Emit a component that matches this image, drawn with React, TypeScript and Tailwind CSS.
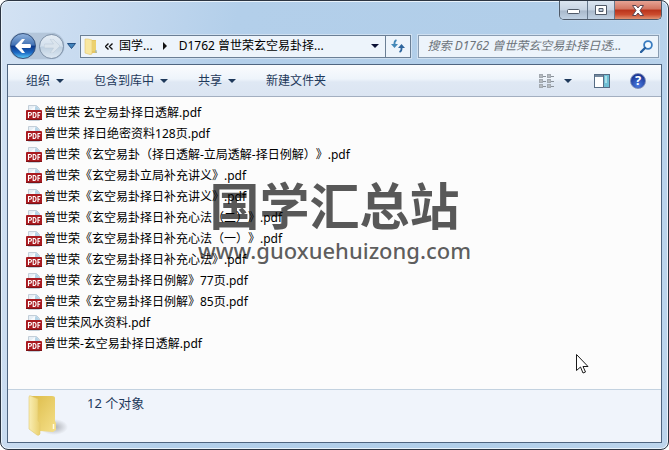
import React from "react";

const files = [
  "曾世荣 玄空易卦择日透解.pdf",
  "曾世荣 择日绝密资料128页.pdf",
  "曾世荣《玄空易卦（择日透解-立局透解-择日例解）》.pdf",
  "曾世荣《玄空易卦立局补充讲义》.pdf",
  "曾世荣《玄空易卦择日补充讲义》.pdf",
  "曾世荣《玄空易卦择日补充心法（二）》.pdf",
  "曾世荣《玄空易卦择日补充心法（一）》.pdf",
  "曾世荣《玄空易卦择日补充心法》.pdf",
  "曾世荣《玄空易卦择日例解》77页.pdf",
  "曾世荣《玄空易卦择日例解》85页.pdf",
  "曾世荣风水资料.pdf",
  "曾世荣-玄空易卦择日透解.pdf",
];

function Caret({ className = "" }: { className?: string }) {
  return (
    <svg width="8" height="4" viewBox="0 0 8 4" className={className} aria-hidden="true">
      <path d="M0 0h8L4 4z" fill="currentColor" />
    </svg>
  );
}

function PdfIcon() {
  return (
    <svg width="16" height="16" viewBox="0 0 16 16" className="shrink-0" aria-hidden="true">
      <path d="M2.500 15.500V.500h8l3 3v12z" fill="#e6eef5" stroke="#c3ced8" />
      <path d="M10 .500 14 5H8z" fill="#b4d3e6" />
      <path d="M3 6 9 1v6z" fill="#f8fbfd" />
      <rect x="0" y="5" width="16" height="10" rx="1" fill="#a91a20" />
      <path d="M0 14.500h16" stroke="#7c1216" />
      <path d="M2.500 13V7.500h1.700q1.300 0 1.300 1.300t-1.300 1.400H3M7.200 7.500v5h1q1.800 0 1.800-2.500T8.200 7.500zM12 13V7.500h2.500M12 10.200h2" fill="none" stroke="#fff" strokeWidth="1.100" />
    </svg>
  );
}

function SmallFolder() {
  return (
    <svg width="14" height="17" viewBox="0 0 14 17" aria-hidden="true">
      <path d="M6 2h6v11l1 1v1H6z" fill="#e6c763" />
      <path d="M1 1h3l4 1v14l-2 .5L1 15z" fill="#f8e7a0" stroke="#e2c56b" strokeWidth=".6" />
      <path d="M8 3h4v10H8z" fill="#ecd16f" />
      <path d="M11.500 12h1v3h-1z" fill="#8fb3c6" />
    </svg>
  );
}

function LargeFolder() {
  return (
    <svg width="40" height="44" viewBox="0 0 40 44" aria-hidden="true">
      <defs>
        <linearGradient id="flap" x1="0" x2="1">
          <stop offset="0" stopColor="#f9eeb4" />
          <stop offset="1" stopColor="#e9cf6d" />
        </linearGradient>
        <linearGradient id="back" x1="0" x2="1" y2="1">
          <stop offset="0" stopColor="#dcbb48" />
          <stop offset="1" stopColor="#f5e08a" />
        </linearGradient>
        <radialGradient id="shade">
          <stop offset="0" stopColor="#8a8c91" stopOpacity=".7" />
          <stop offset="1" stopColor="#8a8c91" stopOpacity="0" />
        </radialGradient>
      </defs>
      <ellipse cx="26" cy="33" rx="14" ry="8" fill="url(#shade)" />
      <path d="M3 2h21q3 0 3 2v23l1 2v7l-3 2-13-1z" fill="url(#back)" />
      <path d="M1 3q0-2 2-1l7 3v22l2 2v11q-1 2-3 1L1 35z" fill="url(#flap)" stroke="#e3ca70" strokeWidth=".6" />
      <path d="M25.500 30v5" stroke="#fffbe6" strokeWidth="1.500" />
    </svg>
  );
}

function NavButtons() {
  return (
    <div className="flex h-[26px] w-[54px] items-center rounded-full bg-[#b4c6da] shadow-[0_0_1px_#7f94ab]">
      <button aria-label="后退" className="flex size-[26px] items-center justify-center rounded-full border border-[#33507c] bg-[linear-gradient(#8fb1dc_0%,#4473b4_45%,#0d3a8c_52%,#1d6ac4_78%,#5cc8f5_100%)]">
        <svg width="16" height="14" viewBox="0 0 16 14" aria-hidden="true">
          <path d="M0 7 7 0h3L6.500 5H15q1 0 1 2t-1 2H6.500L10 14H7z" fill="#fff" />
        </svg>
      </button>
      <button aria-label="前进" className="ml-[3px] flex size-[25px] items-center justify-center rounded-full border border-[#7e91a8] bg-[linear-gradient(#e5edf5_0%,#d3e0ed_48%,#bdcfe0_52%,#dde8f2_100%)]">
        <svg width="16" height="14" viewBox="0 0 16 14" aria-hidden="true">
          <path d="M16 7 9 0H6l3.500 5H1Q0 5 0 7t1 2h8.500L6 14h3z" fill="#dae4ed" stroke="#bdcbd8" strokeWidth=".6" />
        </svg>
      </button>
    </div>
  );
}

function WindowControls() {
  return (
    <div className="flex h-[19px] overflow-hidden rounded-b-[5px] border border-t-0 border-[#4e5a69] shadow-[0_0_1px_#fff]">
      <button aria-label="最小化" className="flex w-7 items-center justify-center border-r border-[#66788c] bg-[linear-gradient(#dbe5f0_0%,#c6d3e2_50%,#a9b9cb_55%,#c0d1e3_100%)]">
        <svg width="13" height="6" viewBox="0 0 13 6" className="mt-1" aria-hidden="true">
          <rect x=".5" y=".5" width="12" height="4" rx="1" fill="#fff" stroke="#505a68" />
        </svg>
      </button>
      <button aria-label="最大化" className="flex w-[27px] items-center justify-center border-r border-[#66788c] bg-[linear-gradient(#dbe5f0_0%,#c6d3e2_50%,#a9b9cb_55%,#c0d1e3_100%)]">
        <svg width="12" height="10" viewBox="0 0 12 10" aria-hidden="true">
          <path d="M.5.500h11v9H.500zM4 3.500v3h4v-3z" fill="#fff" fillRule="evenodd" stroke="#505a68" />
        </svg>
      </button>
      <button aria-label="关闭" className="flex w-[46px] items-center justify-center bg-[linear-gradient(#e6a394_0%,#d27460_45%,#b9331b_50%,#cb4b2e_75%,#e09373_100%)]">
        <svg width="12" height="11" viewBox="0 0 12 11" aria-hidden="true">
          <path d="M.5.500h3.500L6 3 8 .500h3.500L8 5.500l3.500 5H8L6 8l-2 2.500H.500L4 5.500z" fill="#fff" stroke="#5b4550" />
        </svg>
      </button>
    </div>
  );
}

function AddressBar() {
  return (
    <div className="flex h-[23px] min-w-0 flex-[332] items-center border border-[#6b7f95] bg-[#edf4fb] text-black shadow-[0_0_0_1px_#cfe0f1]">
      <div className="ml-[3px] shrink-0"><SmallFolder /></div>
      <button aria-label="上级位置" className="ml-[7px] shrink-0">
        <svg width="8" height="7" viewBox="0 0 8 7" aria-hidden="true">
          <path d="M3.500.500.500 3.500l3 3M7.500.500l-3 3 3 3" fill="none" stroke="#111" strokeWidth="1.400" />
        </svg>
      </button>
      <button className="ml-[6px] shrink-0">国学...</button>
      <svg width="4" height="8" viewBox="0 0 4 8" className="ml-[10px] shrink-0" aria-hidden="true">
        <path d="M0 0v8l4-4z" fill="#111" />
      </svg>
      <button className="ml-3 truncate">D1762 曾世荣玄空易卦择...</button>
      <button aria-label="以前的位置" className="ml-auto mr-[6px] shrink-0 text-[#0b1135]"><Caret /></button>
      <button aria-label="刷新" className="flex h-full w-[25px] shrink-0 items-center justify-center border-l border-[#6b7f95]">
        <svg width="14" height="14" viewBox="0 0 14 14" aria-hidden="true">
          <path d="M5.500 1Q3 2 3.500 6" fill="none" stroke="#4488b8" strokeWidth="1.800" />
          <path d="M0 5h7L3.500 9z" fill="#4488b8" />
          <path d="M8.500 13q2.500-1 2-5" fill="none" stroke="#2e659d" strokeWidth="1.800" />
          <path d="M7 9h7l-3.500-4z" fill="#2e659d" />
        </svg>
      </button>
    </div>
  );
}

function SearchBox() {
  return (
    <label className="flex h-[23px] min-w-0 flex-[242] items-center border border-[#8a9db2] bg-[#edf4fb] shadow-[0_0_0_1px_#cfe0f1]">
      <input
        type="text"
        aria-label="搜索"
        placeholder="搜索 D1762 曾世荣玄空易卦择日透..."
        className="min-w-0 flex-1 bg-transparent pl-[9px] italic outline-none placeholder:text-[#6c737a]"
      />
      <svg width="13" height="13" viewBox="0 0 13 13" className="mr-[5px] shrink-0" aria-hidden="true">
        <circle cx="8" cy="5" r="3.900" fill="#f4faff" stroke="#3a7cc0" strokeWidth="1.800" />
        <path d="M5 8 1 12" stroke="#285f9f" strokeWidth="2.400" strokeLinecap="round" />
      </svg>
    </label>
  );
}

function ViewIcon() {
  return (
    <svg width="15" height="14" viewBox="0 0 15 14" aria-hidden="true">
      {[0, 8].map((x) =>
        [0, 5, 10].map((y) => (
          <g key={`${x}-${y}`}>
            <rect x={x + 0.5} y={y + 0.5} width="3" height="3" fill="#fff" stroke="#a3a9b0" />
            <path d={`M${x + 4} ${y + 2.5}h3`} stroke="#8a929b" />
            <path d={`M${x + 1} ${y + 2}h2`} stroke="#6b747e" />
          </g>
        ))
      )}
    </svg>
  );
}

function Toolbar() {
  return (
    <div className="flex h-8 shrink-0 items-center border-b border-[#a3afc0] bg-[linear-gradient(#fafcfe_0%,#eef4fb_45%,#dfe8f4_55%,#dbe5f2_100%)] pl-[18px] pr-[15px] text-[#1e395b]">
      <button className="flex items-center gap-[6px]">组织 <Caret /></button>
      <button className="ml-[30px] flex items-center gap-[6px]">包含到库中 <Caret /></button>
      <button className="ml-[30px] flex items-center gap-[6px]">共享 <Caret /></button>
      <button className="ml-[30px]">新建文件夹</button>
      <div className="ml-auto flex items-center">
        <button aria-label="更改视图" className="flex items-center gap-[10px]">
          <ViewIcon />
          <Caret />
        </button>
        <button aria-label="显示预览窗格" className="ml-[22px]">
          <svg width="16" height="14" viewBox="0 0 16 14" className="block" aria-hidden="true">
            <rect x=".5" y=".5" width="15" height="13" fill="#fff" stroke="#566c84" />
            <path d="M1 2h14" stroke="#74889e" strokeWidth="2" />
            <rect x="10" y="1" width="5" height="12" fill="#6fbfd4" />
            <path d="M9.500 1v12" stroke="#566c84" />
            <path d="M11 2h2v7h-2z" fill="#a9dfe9" />
          </svg>
        </button>
        <button aria-label="获取帮助" className="ml-5 flex size-4 items-center justify-center rounded-full border border-[#7c8cb8] bg-[radial-gradient(circle_at_50%_80%,#4a7ae0,#1b3796_75%)] text-[13px] font-bold leading-none text-white">?</button>
      </div>
    </div>
  );
}

export default function App() {
  return (
    <div className="h-screen bg-white font-['Noto_Sans','Noto_Sans_CJK_SC',sans-serif] text-[12px] leading-4">
      <div className="flex h-full flex-col overflow-hidden rounded-lg border border-[#2c3542] bg-[linear-gradient(100deg,#d3e2f3_0%,#c5d9ef_15%,#b3cfea_32%,#b1cee9_75%,#bdd5ed_100%)] px-[6px] pb-[6px] shadow-[inset_0_0_0_1px_#e8f2fb]">
        <header className="flex shrink-0 justify-end">
          <WindowControls />
        </header>
        <nav className="mt-[11px] flex h-[30px] shrink-0 items-center px-[3px]" aria-label="地址">
          <NavButtons />
          <button aria-label="最近的页面" className="ml-[3px] mr-1 text-[#215f9a]">
            <svg width="9" height="6" viewBox="0 0 9 6" aria-hidden="true">
              <path d="M.5.500h8L4.500 5.500z" fill="#4284bc" stroke="#234f82" />
            </svg>
          </button>
          <div className="flex min-w-0 flex-1 gap-[7px]">
            <AddressBar />
            <SearchBox />
          </div>
        </nav>
        <section className="mt-[3px] flex min-h-0 flex-1 flex-col border border-[#4f6580] bg-[#fcfcfc]">
          <Toolbar />
          <main className="relative min-h-0 flex-1 overflow-hidden">
            <ul className="pl-[18px] pt-[5px] text-black [text-spacing-trim:space-all]">
              {files.map((name) => (
                <li key={name} className="flex h-[21px] items-center gap-[2px]">
                  <PdfIcon />
                  <span className="whitespace-nowrap">{name}</span>
                </li>
              ))}
            </ul>
            <div className="pointer-events-none absolute left-1/2 top-[79px] flex -translate-x-1/2 flex-col items-center whitespace-nowrap text-black/65">
              <span className="text-[50px] font-bold leading-[60px]">国学汇总站</span>
              <span className="text-[22px] font-medium leading-7">www.guoxuehuizong.com</span>
            </div>
            <svg width="13" height="20" viewBox="0 0 13 20" className="absolute bottom-[15px] right-[72px]" aria-hidden="true">
              <path d="M.5.500v16l4-3.500 2.500 6 2.500-1-2.500-5.500h5z" fill="#fff" stroke="#1a1a1a" />
            </svg>
          </main>
          <footer className="flex h-[53px] shrink-0 border-t border-[#c3d2e0] bg-[#f0f4fb] pl-5 pt-1 text-[#1e395b]">
            <LargeFolder />
            <span className="ml-[19px] mt-px text-[13px]">12 个对象</span>
          </footer>
        </section>
      </div>
    </div>
  );
}
